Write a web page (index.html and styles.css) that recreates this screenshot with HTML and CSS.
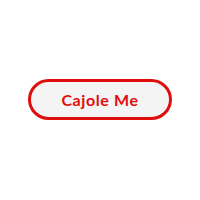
FILE: index.html
```html
<!DOCTYPE html>
<html>
<head>
<meta charset="utf-8">
<link rel="stylesheet" href="styles.css">
</head>
<body>
<div class="stage">
  <button class="cajole">Cajole Me</button>
</div>
</body>
</html>
```
FILE: styles.css
```css
html, body {
  margin: 0;
  padding: 0;
  background: #ffffff;
}
.stage {
  width: 200px;
  height: 200px;
  display: flex;
  align-items: center;
  justify-content: center;
}
.cajole {
  box-sizing: border-box;
  width: 144px;
  height: 41px;
  border: 3px solid #e00d0d;
  border-radius: 21px;
  background: #f4f4f4;
  color: #e00d0d;
  font-family: Lato, "Open Sans", sans-serif;
  font-weight: 700;
  font-size: 16px;
  letter-spacing: 0.6px;
  padding: 0 0 1px 0;
  margin-top: -0.5px;
}
```
